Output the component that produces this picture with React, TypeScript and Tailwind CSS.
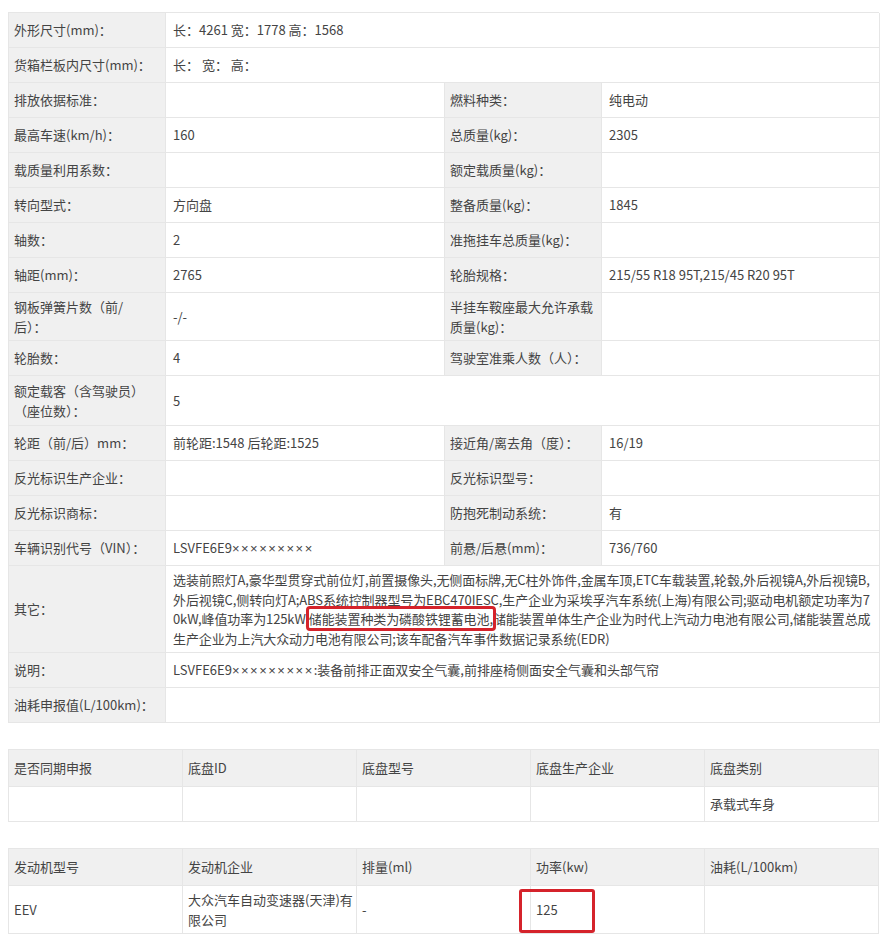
import type { ReactNode } from "react";

function Label({ children, cls = "" }: { children?: ReactNode; cls?: string }) {
  return (
    <div className={`bg-[#f0f0f0] border-b border-r border-[#e6e6e6] pl-[5px] pr-[6px] py-[3.5px] min-h-[35px] flex items-center leading-[20px] ${cls}`}>
      <div>{children}</div>
    </div>
  );
}

function Value({ children, span, cls = "" }: { children?: ReactNode; span?: boolean; cls?: string }) {
  return (
    <div className={`bg-white border-b border-r border-[#e6e6e6] pl-[7px] pr-[4px] py-[3.5px] min-h-[35px] flex items-center leading-[20px] ${span ? "col-span-3" : ""} ${cls}`}>
      <div>{children}</div>
    </div>
  );
}

function Pair({ a, b, c, d, h = "" }: { a: ReactNode; b?: ReactNode; c: ReactNode; d?: ReactNode; h?: string }) {
  return (
    <>
      <Label cls={h}>{a}</Label>
      <Value cls={h}>{b}</Value>
      <Label cls={h}>{c}</Label>
      <Value cls={h}>{d}</Value>
    </>
  );
}

function Wide({ a, b, h = "" }: { a: ReactNode; b?: ReactNode; h?: string }) {
  return (
    <>
      <Label cls={h}>{a}</Label>
      <Value span cls={h}>{b}</Value>
    </>
  );
}

// VIN masked digits are half-width in the source
function Mask() {
  return <span className="font-['Liberation_Sans',sans-serif] tracking-[1.5px]">×××××××××</span>;
}

function SmallTable({ head, row }: { head: string[]; row: ReactNode[] }) {
  return (
    <div className="ml-2 w-[871px] grid grid-cols-5 border-l border-t border-[#e6e6e6]">
      {head.map((t) => (
        <div key={t} className="bg-[#f0f0f0] border-r border-b border-[#e6e6e6] h-[37px] px-[5px] flex items-center">
          {t}
        </div>
      ))}
      {row.map((v, i) => (
        <div key={i} className="relative bg-white border-r border-b border-[#e6e6e6] min-h-[35px] px-[5px] py-[3.5px] flex items-center leading-[20px]">
          {v}
        </div>
      ))}
    </div>
  );
}

export default function App() {
  return (
    <div className="min-h-screen bg-white text-[13px] text-[#444] pt-3 pb-4 font-['Noto_Sans_CJK_SC','Liberation_Sans',sans-serif]">
      <div className="ml-2 w-[871px] grid grid-cols-[157px_279px_157px_278px] border-l border-t border-[#e6e6e6]">
        <Wide a="外形尺寸(mm)：" b="长：4261 宽：1778 高：1568" />
        <Wide a="货箱栏板内尺寸(mm)：" b="长： 宽： 高：" />
        <Pair a="排放依据标准：" c="燃料种类：" d="纯电动" />
        <Pair a="最高车速(km/h)：" b="160" c="总质量(kg)：" d="2305" />
        <Pair a="载质量利用系数：" c="额定载质量(kg)：" />
        <Pair a="转向型式：" b="方向盘" c="整备质量(kg)：" d="1845" />
        <Pair a="轴数：" b="2" c="准拖挂车总质量(kg)：" />
        <Pair a="轴距(mm)：" b="2765" c="轮胎规格：" d="215/55 R18 95T,215/45 R20 95T" />
        <Pair
          a={
            <>
              钢板弹簧片数（前/
              <br />
              后）：
            </>
          }
          b="-/-"
          c="半挂车鞍座最大允许承载质量(kg)："
        />
        <Pair a="轮胎数：" b="4" c="驾驶室准乘人数（人）：" />
        <Wide a="额定载客（含驾驶员）（座位数）：" b="5" h="min-h-[50px]" />
        <Pair a="轮距（前/后）mm：" b="前轮距:1548 后轮距:1525" c="接近角/离去角（度）：" d="16/19" />
        <Pair a="反光标识生产企业：" c="反光标识型号：" />
        <Pair a="反光标识商标：" c="防抱死制动系统：" d="有" />
        <Pair
          a="车辆识别代号（VIN）："
          b={
            <>
              LSVFE6E9<Mask />
            </>
          }
          c="前悬/后悬(mm)："
          d="736/760"
        />
        <Wide
          a="其它："
          h="min-h-[87px]"
          b={
            <div className="whitespace-nowrap leading-[19.5px] tracking-[-0.1px]">
              <div>选装前照灯A,豪华型贯穿式前位灯,前置摄像头,无侧面标牌,无C柱外饰件,金属车顶,ETC车载装置,轮毂,外后视镜A,外后视镜B,</div>
              <div>外后视镜C,侧转向灯A;ABS系统控制器型号为EBC470IESC,生产企业为采埃孚汽车系统(上海)有限公司;驱动电机额定功率为7</div>
              <div>
                0kW,峰值功率为125kW,
                <span className="outline-[3px] outline-solid outline-[#d5232b] rounded-[1px]">储能装置种类为磷酸铁锂蓄电池,</span>
                储能装置单体生产企业为时代上汽动力电池有限公司,储能装置总成
              </div>
              <div>生产企业为上汽大众动力电池有限公司;该车配备汽车事件数据记录系统(EDR)</div>
            </div>
          }
        />
        <Wide
          a="说明："
          b={
            <>
              LSVFE6E9<Mask />:装备前排正面双安全气囊,前排座椅侧面安全气囊和头部气帘
            </>
          }
        />
        <Wide a="油耗申报值(L/100km)：" />
      </div>

      <div className="mt-[26px]">
        <SmallTable
          head={["是否同期申报", "底盘ID", "底盘型号", "底盘生产企业", "底盘类别"]}
          row={["", "", "", "", "承载式车身"]}
        />
      </div>

      <div className="mt-[26px]">
        <SmallTable
          head={["发动机型号", "发动机企业", "排量(ml)", "功率(kw)", "油耗(L/100km)"]}
          row={[
            "EEV",
            <div className="whitespace-nowrap">
              大众汽车自动变速器(天津)有
              <br />
              限公司
            </div>,
            "-",
            <>
              <span className="absolute left-[-12px] top-[3px] w-[76px] h-[44px] border-[3px] border-[#d5232b] rounded-[3px]" />
              <span>125</span>
            </>,
            "",
          ]}
        />
      </div>
    </div>
  );
}
